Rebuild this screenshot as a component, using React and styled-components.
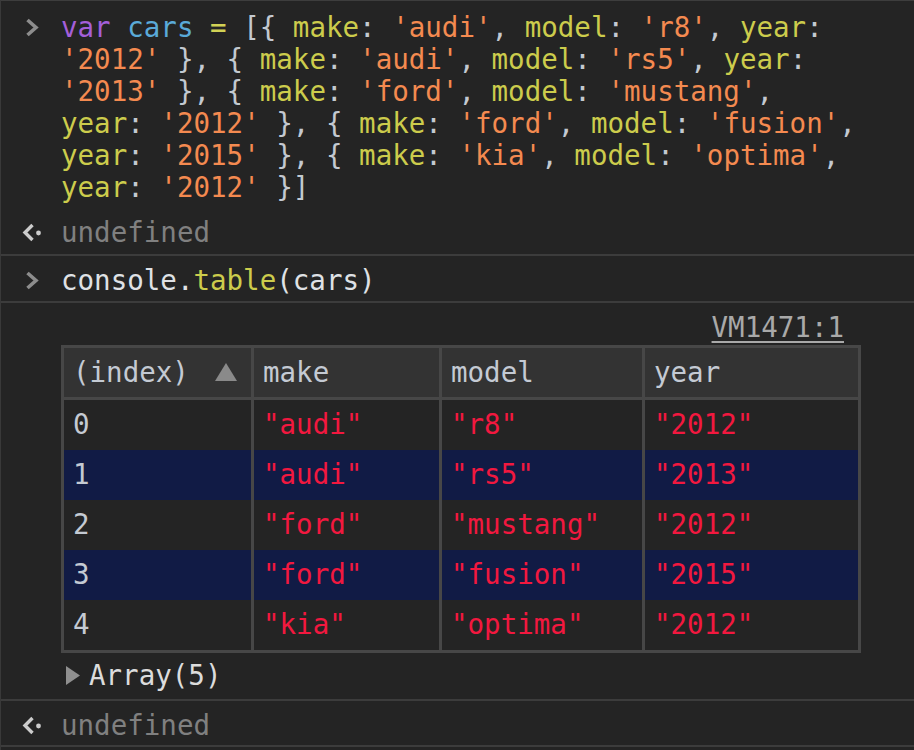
import React from 'react';
import styled, { createGlobalStyle } from 'styled-components';

const GlobalStyle = createGlobalStyle`
  * {
    margin: 0;
    padding: 0;
    box-sizing: border-box;
  }
  html, body {
    background: #242424;
  }
`;

const Console = styled.div`
  min-height: 750px;
  background: #242424;
  border-top: 1px solid #3d3d3d;
  border-left: 1px solid #393939;
  font-family: "DejaVu Sans Mono", "Liberation Mono", monospace;
  font-size: 27.5px;
  line-height: 32px;
  color: #dfe1e5;
`;

const Entry = styled.div`
  display: flex;
  padding-top: ${p => p.$top}px;
  padding-bottom: ${p => p.$bottom}px;
  border-bottom: ${p => (p.$divider ? '2px solid #3c3c3c' : 'none')};
`;

const Gutter = styled.div`
  flex: none;
  width: 60px;
  height: 32px;
  display: flex;
  align-items: center;
  padding-left: ${p => p.$indent}px;
`;

const Content = styled.div`
  flex: 1;
  min-width: 0;
  padding-right: 53px;
`;

const Line = styled.div`
  white-space: pre;
`;

// token colours
const Tok = styled.span`
  color: ${p =>
    ({
      kw: '#a45fd9',
      def: '#5aaad8',
      op: '#d2d255',
      prop: '#cccc4c',
      str: '#f48a50',
      punct: '#c3c9d1',
      plain: '#dfe1e5',
    })[p.$k]};
`;

const Muted = styled.span`
  color: #808080;
`;

const SourceRow = styled.div`
  display: flex;
  justify-content: flex-end;
`;

const SourceLink = styled.span`
  margin-right: 17px;
  color: #a9a9a9;
  text-decoration: underline;
  text-underline-offset: 4px;
  text-decoration-thickness: 2px;
`;

const Table = styled.div`
  margin-top: 2px;
  border: 3px solid #474747;
  display: grid;
  grid-template-columns: 187px 188px 203px 1fr;
`;

const HeadCell = styled.div`
  height: 52px;
  background: #333333;
  border-bottom: 3px solid #474747;
  border-left: ${p => (p.$first ? 'none' : '3px solid #474747')};
  display: flex;
  align-items: center;
  justify-content: space-between;
  padding: 0 14px 2px 9px;
  color: #c4cad3;
`;

const SortArrow = styled.span`
  width: 0;
  height: 0;
  border-left: 11px solid transparent;
  border-right: 11px solid transparent;
  border-bottom: 18px solid #8a8a8a;
`;

const Cell = styled.div`
  height: 50px;
  display: flex;
  align-items: center;
  padding: 0 0 3px 9px;
  background: ${p => (p.$odd ? '#111b45' : '#242424')};
  border-left: ${p => (p.$first ? 'none' : '3px solid #474747')};
  color: ${p => (p.$first ? '#c4cad3' : '#f2183f')};
`;

const ArrayRow = styled.div`
  margin-top: 6px;
  display: flex;
  align-items: center;
  gap: 9px;
  padding-left: 5px;
  color: #dcdcdc;
`;

const Prompt = () => (
  <svg width="14" height="19" viewBox="0 0 14 19">
    <polyline points="2.5,2 11,9.5 2.5,17" fill="none" stroke="#8d8d8d" strokeWidth="3.6" />
  </svg>
);

const Result = () => (
  <svg width="21" height="21" viewBox="0 0 21 21">
    <polyline points="11.5,3 4,10.5 11.5,18" fill="none" stroke="#cccccc" strokeWidth="3.4" />
    <circle cx="17.5" cy="11" r="2.4" fill="#cccccc" />
  </svg>
);

const Disclosure = () => (
  <svg width="14" height="19" viewBox="0 0 14 19">
    <polygon points="0,0 14,9.5 0,19" fill="#8f8f8f" />
  </svg>
);

const cars = [
  { make: 'audi', model: 'r8', year: '2012' },
  { make: 'audi', model: 'rs5', year: '2013' },
  { make: 'ford', model: 'mustang', year: '2012' },
  { make: 'ford', model: 'fusion', year: '2015' },
  { make: 'kia', model: 'optima', year: '2012' },
];

const P = ({ children }) => <Tok $k="punct">{children}</Tok>;
const K = ({ children }) => <Tok $k="prop">{children}</Tok>;
const S = ({ children }) => <Tok $k="str">{children}</Tok>;

export default function App() {
  return (
    <Console>
      <GlobalStyle />

      {/* input */}
      <Entry $top={10} $bottom={5}>
        <Gutter $indent={24}>
          <Prompt />
        </Gutter>
        <Content>
          <Line>
            <Tok $k="kw">var</Tok> <Tok $k="def">cars</Tok> <Tok $k="op">=</Tok> <P>[{'{'}</P>{' '}
            <K>make</K><P>:</P> <S>'audi'</S><P>,</P> <K>model</K><P>:</P> <S>'r8'</S><P>,</P>{' '}
            <K>year</K><P>:</P>
          </Line>
          <Line>
            <S>'2012'</S> <P>{'},'}</P> <P>{'{'}</P> <K>make</K><P>:</P> <S>'audi'</S><P>,</P>{' '}
            <K>model</K><P>:</P> <S>'rs5'</S><P>,</P> <K>year</K><P>:</P>
          </Line>
          <Line>
            <S>'2013'</S> <P>{'},'}</P> <P>{'{'}</P> <K>make</K><P>:</P> <S>'ford'</S><P>,</P>{' '}
            <K>model</K><P>:</P> <S>'mustang'</S><P>,</P>
          </Line>
          <Line>
            <K>year</K><P>:</P> <S>'2012'</S> <P>{'},'}</P> <P>{'{'}</P> <K>make</K><P>:</P>{' '}
            <S>'ford'</S><P>,</P> <K>model</K><P>:</P> <S>'fusion'</S><P>,</P>
          </Line>
          <Line>
            <K>year</K><P>:</P> <S>'2015'</S> <P>{'},'}</P> <P>{'{'}</P> <K>make</K><P>:</P>{' '}
            <S>'kia'</S><P>,</P> <K>model</K><P>:</P> <S>'optima'</S><P>,</P>
          </Line>
          <Line>
            <K>year</K><P>:</P> <S>'2012'</S> <P>{'}]'}</P>
          </Line>
        </Content>
      </Entry>

      <Entry $top={8} $bottom={6} $divider>
        <Gutter $indent={20}>
          <Result />
        </Gutter>
        <Content>
          <Muted>undefined</Muted>
        </Content>
      </Entry>

      {/* console.table */}
      <Entry $top={8} $bottom={5} $divider>
        <Gutter $indent={24}>
          <Prompt />
        </Gutter>
        <Content>
          <Line>
            <Tok $k="plain">console.</Tok>
            <Tok $k="prop">table</Tok>
            <Tok $k="plain">(cars)</Tok>
          </Line>
        </Content>
      </Entry>

      <Entry $top={8} $bottom={8} $divider>
        <Gutter $indent={0} />
        <Content>
          <SourceRow>
            <SourceLink>VM1471:1</SourceLink>
          </SourceRow>
          <Table>
            <HeadCell $first>
              (index)
              <SortArrow />
            </HeadCell>
            <HeadCell>make</HeadCell>
            <HeadCell>model</HeadCell>
            <HeadCell>year</HeadCell>
            {cars.map((c, i) => (
              <React.Fragment key={i}>
                <Cell $first $odd={i % 2 === 1}>{i}</Cell>
                <Cell $odd={i % 2 === 1}>"{c.make}"</Cell>
                <Cell $odd={i % 2 === 1}>"{c.model}"</Cell>
                <Cell $odd={i % 2 === 1}>"{c.year}"</Cell>
              </React.Fragment>
            ))}
          </Table>
          <ArrayRow>
            <Disclosure />
            Array(5)
          </ArrayRow>
        </Content>
      </Entry>

      <Entry $top={8} $bottom={4} $divider>
        <Gutter $indent={20}>
          <Result />
        </Gutter>
        <Content>
          <Muted>undefined</Muted>
        </Content>
      </Entry>
    </Console>
  );
}
